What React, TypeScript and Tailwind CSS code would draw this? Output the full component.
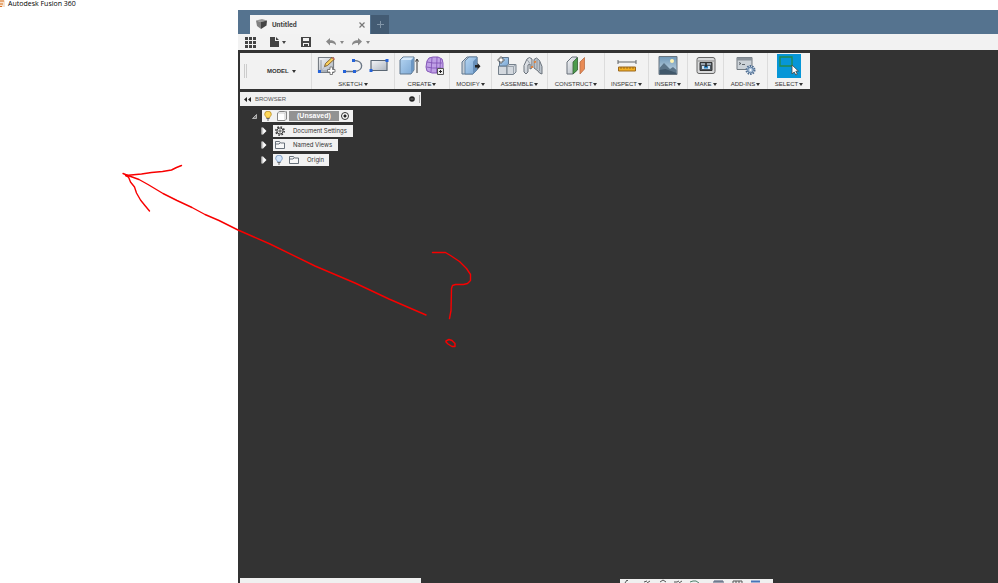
import type { ReactNode } from "react";

function Caret({ className = "" }: { className?: string }) {
  return (
    <svg className={`h-[3px] w-1 shrink-0 ${className}`} viewBox="0 0 4 3" fill="currentColor">
      <path d="M0 0h4L2 3z" />
    </svg>
  );
}

function Icon({ children }: { children: ReactNode }) {
  return (
    <svg className="h-5 w-5" viewBox="0 0 20 20" fill="none" strokeLinejoin="round">
      {children}
    </svg>
  );
}

const icons: Record<string, ReactNode> = {
  "Create Sketch": (
    <Icon>
      <path d="M1.500 1.500h15v15h-15z" fill="url(#steel)" stroke="#777d84" strokeWidth="1.2" />
      <path d="M4 4v11h10" stroke="#7b8693" strokeWidth=".8" />
      <path d="M4 15L13 5" stroke="#aab" strokeWidth=".7" />
      <path d="M7.500 10.500l1-3L15 1.500l2 2-6.500 6z" fill="#f9cf5c" stroke="#6b4a1b" strokeWidth=".8" />
      <path d="M15.500 1.500l2 2" stroke="#c9665c" strokeWidth="1.3" />
      <path d="M13 11h2.500v2.500H18V16h-2.500v2.500H13V16h-2.500v-2.500H13z" fill="#fff" stroke="#666" strokeWidth=".8" />
      <path d="M1 14h3v3H1z" fill="#2563d9" />
    </Icon>
  ),
  Line: (
    <Icon>
      <path d="M1 15.500h10M11 4.500c10 0 10 10 1 11" stroke="#6b7785" strokeWidth="1.4" />
      <path d="M0 14h3v3H0zM10 14h3v3h-3zM9 3h3v3H9z" fill="#2563d9" />
    </Icon>
  ),
  Rectangle: (
    <Icon>
      <path d="M2 4.500h16v10H2z" fill="url(#steel)" stroke="#5b6774" strokeWidth="1.2" />
      <path d="M.5 13h3v3h-3zM16.500 3h3v3h-3z" fill="#2563d9" />
    </Icon>
  ),
  Extrude: (
    <Icon>
      <path d="M1 4l3-3h11v13l-3 4H1z" fill="url(#blue)" stroke="#5f768e" />
      <path d="M1.500 4H12l2.500-2.500h-10z" fill="#d7e9fa" />
      <path d="M12 4.500v13l2.500-3.500V2z" fill="#6b96c3" />
      <path d="M18 17V4M16.500 5.500L18 3l1.500 2.500" stroke="#333" />
    </Icon>
  ),
  "Create Form": (
    <Icon>
      <path d="M4 2l4-1h5l4 2 1 4v5l-2 4-4 1H7l-5-2-1-4 1-6z" fill="#bfa0e6" stroke="#8456b8" />
      <path d="M2 6l6 1h9M1.500 11l6 1h9M7 1.500L6 16M12 1l-.500 16M15.500 3L15 13" stroke="#7d4fb3" strokeWidth=".8" />
      <path d="M12.500 12.500h6v6h-6z" fill="#eee" stroke="#555" />
      <path d="M15.500 14v3M14 15.500h3" stroke="#222" />
    </Icon>
  ),
  "Press Pull": (
    <Icon>
      <path d="M1 6l5-5h10v13l-4 4H1z" fill="#c6cdd5" stroke="#5f768e" />
      <path d="M4 5l4-4h8v13l-4 4H4z" fill="url(#blue)" stroke="#5b7897" strokeWidth=".8" />
      <path d="M12 5.500l4-4V14l-4 4z" fill="#678fb9" />
      <path d="M14 9h2.500V7l3 3.200-3 3.300v-2H14z" fill="#222" />
    </Icon>
  ),
  "New Component": (
    <Icon>
      <path d="M1.500 10h8.500v8.500H1.500z" fill="#d3d8de" stroke="#75808b" />
      <path d="M2.500 4L5 1.500h6.500V8L9.500 10h-7z" fill="url(#blue)" stroke="#5f768e" />
      <path d="M10 10.500l2-2h7v7.500l-2.500 2.500H10z" fill="#d3d8de" stroke="#75808b" />
      <path d="M10 10.500h6.500l2.500-2M16.500 10.500v8" stroke="#8c96a1" strokeWidth=".8" />
      <path d="M3 1h2v2h2v2H5v2H3V5H1V3h2z" fill="#fff" stroke="#555" strokeWidth=".8" />
    </Icon>
  ),
  Joint: (
    <Icon>
      <path d="M1 16V9.500L4 3l2.500-1.500L9 3v9l-2 1V8L5 9v7l-2 2z" fill="url(#steel)" stroke="#6a727b" />
      <path d="M11 9V3.500L13.500 2l3 2.500 2.500 6V18l-2.500-1-1.500-2-4-3z" fill="#bcc4cc" stroke="#6a727b" />
      <path d="M4 3.500L6.500 7M14 4v9M16.500 6v9" stroke="#848d97" strokeWidth=".8" />
      <path d="M8 11.500l2-1M11 6.500l2-1" stroke="#ee7d2b" strokeWidth="1.500" />
    </Icon>
  ),
  "Offset Plane": (
    <Icon>
      <path d="M1 6l5-5h5v13l-4 4H1z" fill="url(#steel)" stroke="#68717a" />
      <path d="M7 6l4.500-4.500V14L7 18z" fill="#4b9b4c" stroke="#39643a" strokeWidth=".8" />
      <path d="M14 6l4.500-4.500V13L14 18z" fill="#e98b55" stroke="#b96e47" strokeWidth=".8" />
    </Icon>
  ),
  Measure: (
    <Icon>
      <path d="M1 6h18M1 4v4M19 4v4" stroke="#606468" />
      <path d="M1.500 11h17v4h-17z" fill="#f3af23" stroke="#9b6820" />
      <path d="M4 11v2M7 11v2M10 11v2M13 11v2M16 11v2" stroke="#805315" strokeWidth=".7" />
    </Icon>
  ),
  "Attached Canvas": (
    <Icon>
      <path d="M1 .5h18v18H1z" fill="url(#sky)" stroke="#687580" />
      <circle cx="14" cy="5" r="2" fill="#fff4b3" />
      <path d="M1.500 12L6 7l6 6 3-2 3.500 3v4h-17z" fill="#5b7488" />
      <path d="M1.500 14l6-1 11 4v1h-17z" fill="#40576a" />
    </Icon>
  ),
  "3D Print": (
    <Icon>
      <rect x="1" y="1.500" width="18" height="16" rx="2" fill="#d9dadb" stroke="#666" />
      <path d="M2 5h16" stroke="#888" />
      <path d="M4 6.500h12v8H4z" fill="#4d565f" stroke="#333" />
      <path d="M5 7h10v2H5z" fill="#97a2ac" />
      <path d="M6 10h8v3H6z" fill="#cfe3f2" />
      <path d="M8 10h4v2.500H8z" fill="#2d83c4" />
      <path d="M10 7v4" stroke="#222" strokeWidth="1.500" />
    </Icon>
  ),
  "Scripts and Add-Ins": (
    <Icon>
      <path d="M1 1.500h15v12H1z" fill="#ccd2d8" stroke="#717980" />
      <path d="M1 1.500h15v3H1z" fill="#8b939b" />
      <path d="M3 6.500l2 1-2 1M6 8.500h3" stroke="#434a51" strokeWidth=".8" />
      <circle cx="14.500" cy="14" r="4" fill="#d8e5f2" stroke="#4f6d91" strokeWidth="2" strokeDasharray="1.500 1" />
      <circle cx="14.500" cy="14" r="2.800" fill="#aec6df" stroke="#4f6d91" strokeWidth=".8" />
      <circle cx="14.500" cy="14" r="1" fill="#fff" />
    </Icon>
  ),
};

const groups = [
  { name: "SKETCH", width: "w-[83px]", tools: ["Create Sketch", "Line", "Rectangle"] },
  { name: "CREATE", width: "w-[55px]", tools: ["Extrude", "Create Form"] },
  { name: "MODIFY", width: "w-[42px]", tools: ["Press Pull"] },
  { name: "ASSEMBLE", width: "w-[56px]", tools: ["New Component", "Joint"] },
  { name: "CONSTRUCT", width: "w-[57px]", tools: ["Offset Plane"] },
  { name: "INSPECT", width: "w-[44px]", tools: ["Measure"] },
  { name: "INSERT", width: "w-[39px]", tools: ["Attached Canvas"] },
  { name: "MAKE", width: "w-[36px]", tools: ["3D Print"] },
  { name: "ADD-INS", width: "w-[44px]", tools: ["Scripts and Add-Ins"] },
  { name: "SELECT", width: "w-[43px]", tools: ["Select"] },
];

function ToolGroup({ name, width, tools }: (typeof groups)[number]) {
  return (
    <div className={`flex shrink-0 flex-col items-center border-l border-[#dcdcdc] ${width}`}>
      <div className="flex h-[26px] items-center gap-[6px]">
        {tools.map((tool) =>
          tool === "Select" ? (
            <button key={tool} type="button" aria-label={tool} className="bg-[#0696d7]">
              <svg className="h-6 w-6" viewBox="0 0 24 24" fill="none">
                <path d="M3 3h12v9H3z" stroke="#238b4c" strokeWidth="1.300" />
                <path d="M15 11v9l2.200-2 1.600 3 1.500-.800-1.500-3h2.700z" fill="#fff" stroke="#444" strokeWidth=".8" />
              </svg>
            </button>
          ) : (
            <button key={tool} type="button" aria-label={tool}>
              {icons[tool]}
            </button>
          )
        )}
      </div>
      <button type="button" className="flex h-[10px] items-center gap-[1px]">
        {name}
        <Caret />
      </button>
    </div>
  );
}

function Bulb({ on = false }: { on?: boolean }) {
  return (
    <svg className="h-[10px] w-2 shrink-0" viewBox="0 0 8 10">
      <path
        d="M2.500 7C2.500 5.500.7 5 .7 3.200a3.300 3 0 0 1 6.600 0C7.300 5 5.500 5.500 5.500 7z"
        fill={on ? "#ffd95a" : "#d4e6fb"}
        stroke={on ? "#b98c22" : "#6c8db7"}
        strokeWidth=".8"
      />
      <path d="M2.500 7.500h3M3 9h2" stroke="#666" />
    </svg>
  );
}

function Folder() {
  return (
    <svg className="h-2 w-[10px] shrink-0" viewBox="0 0 10 8" fill="#f8f8f8" stroke="#59636d" strokeWidth=".9">
      <path d="M.5 7.500v-7h4l1 1.500h4v5.500z" />
      <path d="M.5 3H4l1-1" />
    </svg>
  );
}

function Gear() {
  return (
    <svg className="h-[10px] w-[10px] shrink-0" viewBox="0 0 10 10" fill="none" stroke="#333">
      <circle cx="5" cy="5" r="4.200" strokeWidth="1.400" strokeDasharray="1.600 1.700" />
      <circle cx="5" cy="5" r="3.100" />
      <circle cx="5" cy="5" r="1.100" strokeWidth=".8" />
    </svg>
  );
}

function Expander() {
  return (
    <button type="button" aria-label="Expand" className="mr-[6px]">
      <svg className="h-2 w-[6px]" viewBox="0 0 6 8">
        <path d="M.5.5H2l3.500 3.500L2 7.500H.5z" fill="#fff" />
        <path d="M1.700 0v8" stroke="#888" strokeWidth=".5" />
      </svg>
    </button>
  );
}

function Browser() {
  return (
    <section className="mt-[3px] w-[181px]">
      <header className="flex h-[14px] items-center bg-[#f0f0f0] pl-1 text-[#555]">
        <button type="button" aria-label="Collapse browser">
          <svg className="h-[5px] w-[7px]" viewBox="0 0 7 5" fill="#222">
            <path d="M3 0v5L0 2.500zM7 0v5L4 2.500z" />
          </svg>
        </button>
        <h2 className="ml-1">BROWSER</h2>
        <button type="button" aria-label="Browser options" className="mr-1 ml-auto">
          <svg className="h-[6px] w-[6px]" viewBox="0 0 6 6">
            <circle cx="3" cy="3" r="2.800" fill="#222" />
            <path d="M1.500 3h3" stroke="#aaa" strokeWidth=".7" />
          </svg>
        </button>
        <span className="h-2 w-[2px] border-l border-[#aaa]" />
      </header>

      <ul className="mt-1 flex h-14 flex-col justify-between font-['Inter',sans-serif] text-[6px] text-[#333]">
        <li className="flex h-3 items-center pl-3">
          <button type="button" aria-label="Collapse" className="mr-[5px]">
            <svg className="h-[5px] w-[5px]" viewBox="0 0 5 5">
              <path d="M4.500.5v4h-4z" fill="#777" stroke="#ddd" strokeWidth=".7" />
            </svg>
          </button>
          <div className="flex h-3 items-center bg-[#f2f2f2] pr-1 pl-[2px]">
            <Bulb on />
            <svg className="ml-1 h-3 w-3" viewBox="0 0 12 12" fill="#fff" stroke="#666" strokeWidth=".8">
              <path d="M1.500 3l2-1.500h7V9L9 10.500H1.500z" />
              <path d="M1.500 3H9l1.500-1.500M9 3v7.500" stroke="#bbb" />
            </svg>
            <button
              type="button"
              className="ml-[1px] h-[10px] bg-[#929292] px-2 font-['Liberation_Sans',sans-serif] text-[7px] leading-[10px] font-bold text-white"
            >
              (Unsaved)
            </button>
            <label className="ml-[2px] flex">
              <input
                type="radio"
                name="active"
                aria-label="Activate component"
                defaultChecked
                className="h-2 w-2 appearance-none rounded-full border border-[#333] bg-[radial-gradient(circle,#222_0_1px,#fff_2px)]"
              />
            </label>
          </div>
        </li>
        <li className="flex h-3 items-center pl-[21px]">
          <Expander />
          <div className="flex h-3 items-center bg-[#f2f2f2] pr-[6px] pl-[2px]">
            <Gear />
            <span className="ml-2">Document Settings</span>
          </div>
        </li>
        <li className="flex h-3 items-center pl-[21px]">
          <Expander />
          <div className="flex h-3 items-center bg-[#f2f2f2] pr-[6px] pl-[2px]">
            <Folder />
            <span className="ml-2">Named Views</span>
          </div>
        </li>
        <li className="flex h-3 items-center pl-[21px]">
          <Expander />
          <div className="flex h-3 items-center bg-[#f2f2f2] pr-[5px] pl-[2px]">
            <Bulb />
            <span className="ml-[6px] flex items-center gap-2">
              <Folder />
              Origin
            </span>
          </div>
        </li>
      </ul>
    </section>
  );
}

function TabBar() {
  return (
    <div className="flex h-6 items-end bg-[#55738f] pl-3">
      <div className="flex h-[19px] w-[120px] items-center bg-[#f3f3f3] pr-[5px] pl-[6px] text-[#444]">
        <svg className="mb-[2px] h-[10px] w-[11px]" viewBox="0 0 11 10">
          <path d="M0 1.500L6 0l5 1.500L5 3z" fill="#999" />
          <path d="M0 1.500L5 3v7L1 7z" fill="#808080" />
          <path d="M5 3l6-1.500-.500 5L5 10z" fill="#444" />
        </svg>
        <span className="ml-[5px] font-['Roboto',sans-serif] text-[7px] font-bold">Untitled</span>
        <button type="button" aria-label="Close tab" className="ml-auto">
          <svg className="h-[6px] w-[6px]" viewBox="0 0 6 6" stroke="#777" strokeWidth="1.200">
            <path d="M.5.5l5 5M5.500.5l-5 5" />
          </svg>
        </button>
      </div>
      <button type="button" aria-label="New tab" className="ml-[1px] flex h-[19px] w-[18px] items-center justify-center bg-[#435b73]">
        <svg className="h-[7px] w-[7px]" viewBox="0 0 7 7" stroke="#8195a8">
          <path d="M3.500 0v7M0 3.500h7" />
        </svg>
      </button>
    </div>
  );
}

function QuickAccess() {
  return (
    <div className="flex h-4 items-center bg-[#f2f2f2] pl-[7px] text-[#444]">
      <button type="button" aria-label="Data panel">
        <svg className="h-[11px] w-[11px]" viewBox="0 0 11 11" fill="currentColor">
          <path d="M0 0h3v3H0zM4 0h3v3H4zM8 0h3v3H8zM0 4h3v3H0zM4 4h3v3H4zM8 4h3v3H8zM0 8h3v3H0zM4 8h3v3H4zM8 8h3v3H8z" />
        </svg>
      </button>
      <button type="button" aria-label="File" className="ml-[14px] flex items-center gap-[3px]">
        <svg className="h-[10px] w-[9px]" viewBox="0 0 9 10" fill="currentColor">
          <path d="M0 0h5v4h4v6H0zM6 0l3 3H6z" />
        </svg>
        <Caret />
      </button>
      <button type="button" aria-label="Save" className="ml-[15px]">
        <svg className="h-[10px] w-[10px]" viewBox="0 0 10 10" fill="currentColor" fillRule="evenodd">
          <path d="M0 0h10v10H0zM2 1v3h6V1zM2 6v3h1V7h4v2h1V6z" />
        </svg>
      </button>
      <button type="button" aria-label="Undo" className="ml-[15px] flex items-center gap-1 text-[#888]">
        <svg className="h-2 w-[10px]" viewBox="0 0 10 8" fill="currentColor">
          <path d="M0 3.500L4 0v2.300c4 0 6 1.700 6 5C8.500 5.500 7 5 4 5v2.500z" />
        </svg>
        <Caret />
      </button>
      <button type="button" aria-label="Redo" className="ml-2 flex items-center gap-1 text-[#888]">
        <svg className="h-2 w-[10px]" viewBox="0 0 10 8" fill="currentColor">
          <path d="M10 3.500L6 0v2.300c-4 0-6 1.700-6 5C1.500 5.500 3 5 6 5v2.500z" />
        </svg>
        <Caret />
      </button>
    </div>
  );
}

// Only the top edge of the comments panel and of the navigation bar is on screen.
function BottomBars() {
  return (
    <div className="mt-auto flex h-[5px] items-end overflow-hidden">
      <div className="h-[5px] w-[181px] shrink-0 bg-[#f0f0f0]" />
      <div className="ml-[199px] h-1 w-[153px] shrink-0 bg-[#f0f0f0]">
        <svg className="h-1 w-[153px]" viewBox="0 0 153 4" fill="none" stroke="#555">
          <path d="M5 4l2-3 1 1M24 3l3-1M27 4l3-2M40 3l3-2 3 2M54 3h3l2-1M59 4l3-2" />
          <path d="M70 3l3-1h3l3 2" stroke="#4d806c" />
          <path d="M94 4V2h9v2M95 3h7" stroke="#44536f" />
          <path d="M113 4V2h9v2M116 2v2M119 2v2" />
          <path d="M131 2.500h9" stroke="#4774b8" strokeWidth="2" />
        </svg>
      </div>
    </div>
  );
}

function Markup() {
  return (
    <svg
      className="pointer-events-none absolute top-0 left-0 h-[583px] w-[998px]"
      viewBox="0 0 998 583"
      fill="none"
      stroke="#f80000"
      strokeWidth="1.400"
      strokeLinecap="round"
      strokeLinejoin="round"
    >
      <path d="M123 173.500l5 2 11 4 9 5 15 9 14 7 15 7 13 7 14 6 19 9.500 32 14 45 22 40 17 34 16 37 16" />
      <path d="M181.500 165.500l-5 2-5 2.500-9 1.500-11 1-10 1.500-16 1.500 3 1.500 2 5 4 5 2 6 4 7 4 5 5 6" />
      <path d="M432.500 252.500h13l5 3 9 6 7 7 4 6v6l-3 3-4 1h-8l-3 1-1 3-.500 22-1.500 8" />
      <path d="M446 341l3-1.500 3 1 3 3v3h-3l-4-2.500-2-2z" />
    </svg>
  );
}

export default function App() {
  return (
    <div className="relative flex h-screen flex-col overflow-hidden bg-white font-['Liberation_Sans',sans-serif] text-[6px] leading-[8px] text-[#333]">
      <svg className="absolute h-0 w-0" aria-hidden="true">
        <defs>
          <linearGradient id="steel" x2="1" y2="1">
            <stop stopColor="#f5f6f8" />
            <stop offset="1" stopColor="#adb5bf" />
          </linearGradient>
          <linearGradient id="blue" x2="1" y2="1">
            <stop stopColor="#b5d5f2" />
            <stop offset="1" stopColor="#7aa6d3" />
          </linearGradient>
          <linearGradient id="sky" x2="0" y2="1">
            <stop stopColor="#6f98b8" />
            <stop offset="1" stopColor="#cbdce7" />
          </linearGradient>
        </defs>
      </svg>

      <header className="flex h-[10px] shrink-0 items-start text-black">
        <svg className="h-2 w-[5px]" viewBox="0 0 5 8">
          <path d="M0 0h4l1 1v6H0z" fill="#f8e2cf" />
          <path d="M0 1h4M0 4h3M0 6.500h2" stroke="#d87322" strokeWidth="1.200" />
        </svg>
        <h1 className="ml-[3px] font-['Open_Sans',sans-serif] text-[7px] leading-[8px]">Autodesk Fusion 360</h1>
      </header>

      <main className="ml-[238px] flex min-h-0 flex-1 flex-col bg-[#333]">
        <TabBar />
        <QuickAccess />
        <div className="flex min-h-0 flex-1 flex-col pt-[3px] pl-[2px]">
          <nav className="flex h-9 w-fit bg-[#f2f2f2]">
            <div className="flex w-[71px] items-center pl-1">
              <span className="h-[14px] w-[3px] border-x border-[#ccc]" />
              <button type="button" className="ml-5 flex items-center gap-[3px] font-bold">
                MODEL
                <Caret />
              </button>
            </div>
            {groups.map((group) => (
              <ToolGroup key={group.name} {...group} />
            ))}
          </nav>
          <Browser />
          <BottomBars />
        </div>
      </main>

      <Markup />
    </div>
  );
}
